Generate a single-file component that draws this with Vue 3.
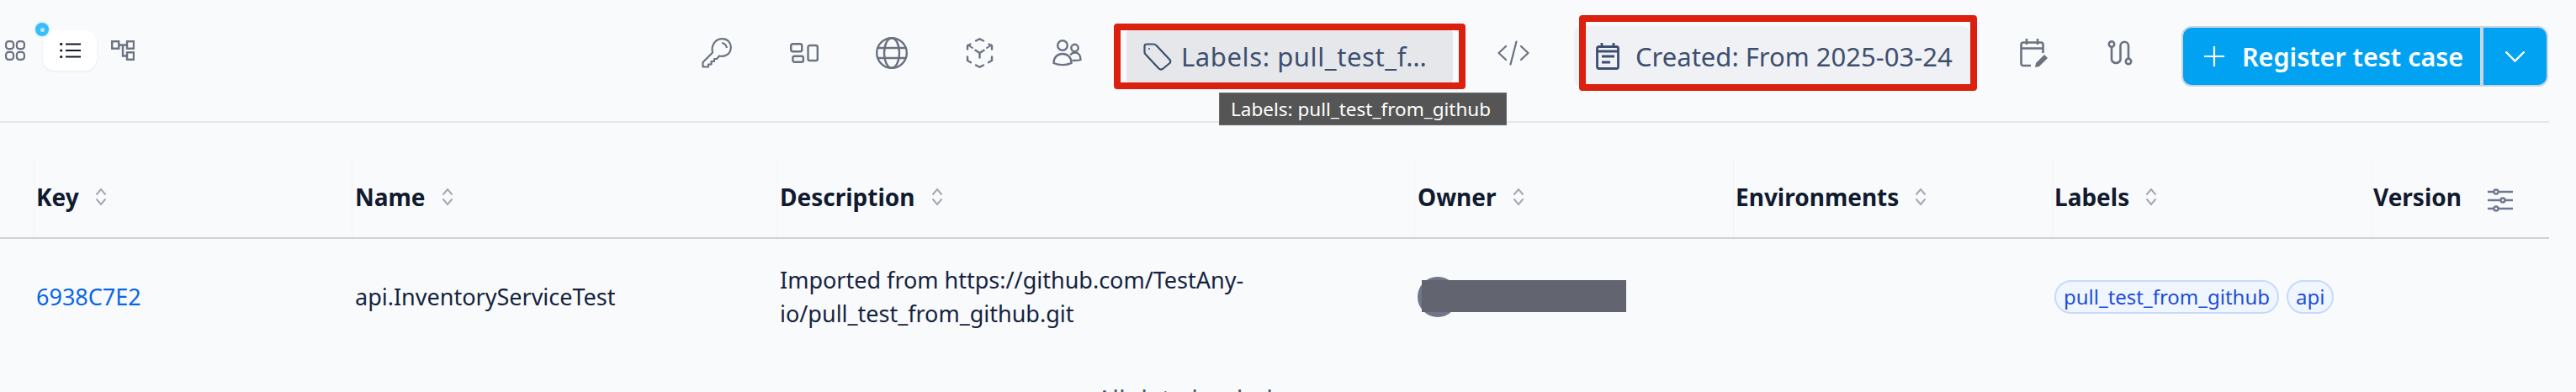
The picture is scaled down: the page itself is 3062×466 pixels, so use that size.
<script setup>
const views = [
  { id: 'grid', active: false },
  { id: 'list', active: true },
  { id: 'tree', active: false }
]
const columns = [
  { label: 'Key', width: 378, pad: 3, sort: true },
  { label: 'Name', width: 505, pad: 4, sort: true },
  { label: 'Description', width: 758, pad: 4, sort: true },
  { label: 'Owner', width: 379, pad: 4, sort: true },
  { label: 'Environments', width: 379, pad: 3, sort: true },
  { label: 'Labels', width: 379, pad: 3, sort: true },
  { label: 'Version', width: 212, pad: 3, sort: false }
]
const cell = (i) => ({ width: columns[i].width + 'px', paddingLeft: columns[i].pad + 'px' })
</script>

<template>
  <div class="page">
    <header class="toolbar">
      <div class="views">
        <button v-for="v in views" :key="v.id" class="view" :class="[v.id, { active: v.active }]">
          <svg v-if="v.id === 'grid'" width="24" height="24" viewBox="0 0 24 24" fill="none" stroke="#6b7280" stroke-width="2.200">
            <rect x="1.100" y="1.100" width="9" height="9" rx="3.200" /><rect x="13.900" y="1.100" width="9" height="9" rx="3.200" />
            <rect x="1.100" y="13.900" width="9" height="9" rx="3.200" /><rect x="13.900" y="13.900" width="9" height="9" rx="3.200" />
          </svg>
          <svg v-else-if="v.id === 'list'" width="25" height="18" viewBox="0 0 25 18" fill="none" stroke="#111827" stroke-width="2">
            <path d="M7 1.500h18M7 9h18M7 16.500h18" /><circle cx="1.700" cy="1.500" r="1.600" fill="#111827" stroke="none" /><circle cx="1.700" cy="9" r="1.600" fill="#111827" stroke="none" /><circle cx="1.700" cy="16.500" r="1.600" fill="#111827" stroke="none" />
          </svg>
          <svg v-else width="28" height="24" viewBox="0 0 28 24" fill="none" stroke="#6b7280" stroke-width="2.400">
            <rect x="1.200" y="1.200" width="8" height="8.500" /><rect x="19" y="1.200" width="8" height="8.500" /><rect x="19" y="14.300" width="8" height="8.500" />
            <path d="M9 5.500h10M14 5.500v13h5" />
          </svg>
        </button>
        <span class="dot"><i></i></span>
      </div>

      <div class="actions">
        <button class="ico">
          <svg width="36" height="36" viewBox="0 0 36 36" fill="none" stroke="#6b7280" stroke-width="2.200" stroke-linejoin="round">
            <path d="M1.500 34.500V29L13 17.500C11 9 16 1.200 25 1.200 31 1.200 34.800 6 34.800 11 34.800 19 28 23 21 21.500L18 25h-3v3h-3.500v3.500H8v3z" /><path d="M24 6c3 .5 5.500 3 6 6" />
          </svg>
        </button>
        <button class="ico">
          <svg width="34" height="24" viewBox="0 0 34 24" fill="none" stroke="#6b7280" stroke-width="2.400">
            <rect x="1.200" y="1.200" width="13" height="9" rx="2" /><rect x="3.400" y="15.800" width="12.500" height="7" rx="2" /><rect x="21.500" y="3" width="11.300" height="18" rx="2" />
          </svg>
        </button>
        <button class="ico">
          <svg width="38" height="38" viewBox="0 0 38 38" fill="none" stroke="#6b7280" stroke-width="2.400">
            <circle cx="19" cy="19" r="17.800" /><ellipse cx="19" cy="19" rx="9" ry="17.800" /><path d="M3 13h32M3 25h32" />
          </svg>
        </button>
        <button class="ico">
          <svg width="33" height="36" viewBox="0 0 33 36" fill="none" stroke="#6b7280" stroke-width="2.400" stroke-linecap="round" stroke-linejoin="round">
            <path d="M12 3.500l4.500-2.300L21 3.500M2 13.500V9.500l3.500-2M27.500 7.500L31 9.500v4M2 22.500v4.500l4 2.200M31 22.500v4.500l-4 2.200M12 32.500l4.500 2.300 4.500-2.300M16.500 18l-5-3.200M16.500 18l5-3.200M16.500 18v5.500" />
            <path d="M2.500 8.500l5.500 3.500M30.500 8.500L25 12" stroke-width="2" />
          </svg>
        </button>
        <button class="ico">
          <svg width="35" height="32" viewBox="0 0 35 32" fill="none" stroke="#6b7280" stroke-width="2.400">
            <circle cx="12" cy="7" r="5.800" /><circle cx="26.500" cy="10" r="4.200" />
            <path d="M1.500 28c0-7 4.500-11 10.500-11s10.500 4 10.500 11c-6 2.800-15 2.800-21 0z" /><path d="M21.500 18.500c1-2 3-3 5.500-3 4 0 6.500 3.500 6.500 8.500-2 .8-5.500 1-10 1" />
          </svg>
        </button>

        <div class="filter-wrap">
          <button class="filter filter-labels">
            <svg width="34" height="33" viewBox="0 0 34 33" fill="none" stroke="#3d4f6f" stroke-width="2.200" stroke-linejoin="round">
              <path d="M1.500 4Q1.500 1.500 4 1.500H12Q14 1.500 15.500 3L31.500 20Q33 22 31.500 24L23 31Q20.500 32.500 18.500 30.500L3 14Q1.500 12.500 1.500 11Z" /><circle cx="7" cy="7" r="1" fill="#3d4f6f" stroke="none" />
            </svg>
            <span class="labels-text">Labels: pull_test_f…</span>
          </button>
          <div class="tooltip">Labels: pull_test_from_github</div>
          <span class="mark mark-labels"></span>
        </div>

        <button class="ico ico-code">
          <svg width="38" height="30" viewBox="0 0 38 30" fill="none" stroke="#6b7280" stroke-width="2.200" stroke-linecap="round" stroke-linejoin="round">
            <path d="M10 7L1.500 15 10 23M28 7l8.500 8L28 23M22.500 1.500L15.500 28.500" />
          </svg>
        </button>

        <div class="filter-wrap">
          <button class="filter filter-created">
            <svg width="28" height="32" viewBox="0 0 28 32" fill="none" stroke="#3d4f6f" stroke-width="2.800">
              <rect x="1.500" y="4.500" width="25" height="26" rx="2" /><path d="M7 0v6M21 0v6M1.500 10h25" /><path d="M7 16h15M7 23h10" />
            </svg>
            <span>Created: From 2025-03-24</span>
          </button>
          <span class="mark mark-created"></span>
        </div>

        <button class="ico ico-edit">
          <svg width="34" height="34" viewBox="0 0 34 34" fill="none" stroke="#6b7280" stroke-width="2.600">
            <path d="M13 32H4c-1.500 0-2.500-1-2.500-2.500V7C1.500 5.500 2.500 4.500 4 4.500h21c1.500 0 2.500 1 2.500 2.500v10M1.500 11.500h26M8 0v7M21 0v7" /><path d="M18 34l1-5 10-10 4 4-10 10z" fill="#6b7280" stroke="none" />
          </svg>
        </button>
        <button class="ico ico-branch">
          <svg width="30" height="30" viewBox="0 0 30 30" fill="none" stroke="#6b7280" stroke-width="2.600">
            <circle cx="5" cy="4.500" r="3.200" /><circle cx="25" cy="25" r="3.200" />
            <path d="M5 7.700V23a5.500 5.500 0 0 0 10.500 0V6.500a4.700 4.700 0 0 1 9.500 0v15.200" />
          </svg>
        </button>

        <div class="register">
          <button class="reg-main">
            <svg width="24" height="24" viewBox="0 0 24 24" fill="none" stroke="#fff" stroke-width="2.200"><path d="M12 0v24M0 12h24" /></svg>
            <span>Register test case</span>
          </button>
          <button class="reg-more">
            <svg width="25" height="14" viewBox="0 0 25 14" fill="none" stroke="#fff" stroke-width="2.400"><path d="M1.500 1.500L12.500 12.500 23.500 1.500" /></svg>
          </button>
        </div>
      </div>
    </header>

    <div class="table">
      <div class="thead">
        <div v-for="(c, i) in columns" :key="c.label" class="th" :style="cell(i)">
          <span class="th-label">{{ c.label }}</span>
          <svg v-if="c.sort" class="sort" width="14" height="22" viewBox="0 0 14 22" fill="none" stroke="#a2a8b4" stroke-width="2">
            <path d="M1.500 8.500L7 2l5.500 6.500M1.500 13.500L7 20l5.500-6.500" />
          </svg>
          <svg v-else class="settings" width="30" height="28" viewBox="0 0 30 28" fill="none" stroke="#6f7890" stroke-width="2.400">
            <path d="M0 4h30M0 14h30M0 24h30" /><circle cx="10" cy="4" r="2.500" fill="#f9fafc" /><circle cx="18" cy="14" r="2.500" fill="#f9fafc" /><circle cx="10" cy="24" r="2.500" fill="#f9fafc" />
          </svg>
        </div>
      </div>

      <div class="row">
        <div class="td" :style="cell(0)"><a class="key">6938C7E2</a></div>
        <div class="td" :style="cell(1)">api.InventoryServiceTest</div>
        <div class="td" :style="cell(2)">Imported from https://github.com/TestAny-<br />io/pull_test_from_github.git</div>
        <div class="td owner" :style="cell(3)"><span class="avatar"><span class="mask"></span></span></div>
        <div class="td" :style="cell(4)"></div>
        <div class="td tags" :style="cell(5)"><span class="tag">pull_test_from_github</span><span class="tag">api</span></div>
      </div>
    </div>

    <div class="foot">All data loaded</div>
  </div>
</template>

<style scoped>
.page {
  width: 3062px;
  height: 466px;
  overflow: hidden;
  background: #f9fafc;
  font-family: "Noto Sans", "Open Sans", sans-serif;
  color: #15233f;
}
button {
  border: 0;
  background: none;
  padding: 0;
  font: inherit;
  display: inline-flex;
  align-items: center;
  flex: none;
}
.toolbar {
  box-sizing: border-box;
  width: 3030px;
  height: 146px;
  padding: 31px 1px 0 6px;
  border-bottom: 2px solid #e5e7eb;
  display: flex;
  align-items: flex-start;
}
.views {
  display: flex;
  align-items: center;
  position: relative;
  height: 48px;
  margin-top: 5px;
}
.view {
  height: 48px;
  justify-content: center;
}
.view.grid {
  width: 24px;
  margin-right: 21px;
}
.view.list {
  width: 64px;
  margin-right: 17px;
  background: #fff;
  border-radius: 14px;
  box-shadow: 0 1px 3px rgba(17, 24, 39, 0.08);
}
.view.tree {
  width: 28px;
}
.dot {
  position: absolute;
  left: 36px;
  top: -9px;
  width: 16px;
  height: 16px;
  border-radius: 50%;
  background: #38bdf8;
  box-shadow: 0 0 0 2px #e0f2fe;
  display: flex;
  align-items: center;
  justify-content: center;
}
.dot i {
  width: 5px;
  height: 5px;
  border-radius: 50%;
  background: #bae6fd;
}
.actions {
  display: flex;
  align-items: center;
  margin-left: auto;
  height: 72px;
}
.ico {
  width: 104px;
  height: 64px;
  justify-content: center;
  margin-bottom: 8px;
}
.ico-code {
  width: 144px;
}
.ico-edit {
  width: 152px;
}
.ico-branch {
  width: 52px;
  margin-right: 47px;
}
.filter-wrap {
  position: relative;
  height: 72px;
}
.filter-wrap:first-of-type {
  margin-left: 19px;
}
.filter {
  height: 72px;
  border-radius: 10px;
  color: #3d4f6f;
  font-size: 31px;
  white-space: nowrap;
}
.labels-text {
  letter-spacing: 0.6px;
}
.filter-labels {
  width: 388px;
  background: #e5e7eb;
  padding-left: 20px;
  gap: 11px;
}
.filter-created {
  width: 471px;
  background: #f0f1f5;
  padding-left: 26px;
  gap: 19px;
}
.mark {
  position: absolute;
  box-sizing: border-box;
  border: 8px solid #dc200f;
  border-radius: 4px;
  pointer-events: none;
}
.mark-labels {
  left: -15px;
  top: -3px;
  width: 418px;
  height: 78px;
}
.mark-created {
  left: 6px;
  top: -13px;
  width: 473px;
  height: 90px;
}
.tooltip {
  position: absolute;
  left: 110px;
  top: 79px;
  box-sizing: border-box;
  width: 342px;
  height: 39px;
  background: #555;
  border: 1px solid #6b6b6b;
  color: #fff;
  font-size: 22.500px;
  line-height: 37px;
  padding-left: 13px;
  white-space: nowrap;
  z-index: 2;
}
.register {
  box-sizing: border-box;
  display: flex;
  width: 436px;
  height: 72px;
  background: #02a2f2;
  border: 2px solid #cbd5e1;
  border-radius: 12px;
  overflow: hidden;
  font-weight: 600;
  font-size: 30.500px;
}
.reg-main {
  box-sizing: border-box;
  width: 357px;
  color: #fff;
  gap: 21px;
  padding-left: 25px;
  font-weight: 600;
  border-right: 4px solid #cbd5e1;
}
.reg-more {
  flex: 1;
  justify-content: center;
}
.table {
  width: 3030px;
}
.thead {
  display: flex;
  height: 94px;
  padding: 42px 0 0 40px;
  border-bottom: 2px solid #cfd1d8;
}
.th {
  font-weight: 700;
  font-size: 28px;
  color: #111a2e;
  display: flex;
  align-items: flex-start;
  gap: 19px;
  box-sizing: border-box;
  padding-top: 24px;
  line-height: 44px;
  flex: none;
  border-left: 1px solid #f3f4f6;
}
.th-label {
  margin-left: -1px;
}
.sort {
  margin-top: 11px;
}
.settings {
  margin-left: 12px;
  margin-top: 12px;
}
.row {
  display: flex;
  align-items: center;
  height: 138px;
  padding-left: 40px;
}
.td {
  font-size: 27px;
  flex: none;
  box-sizing: border-box;
  line-height: 40px;
}
.key {
  color: #0a66e8;
}
.owner {
  height: 48px;
}
.avatar {
  position: relative;
  display: block;
  width: 48px;
  height: 48px;
  border-radius: 50%;
  background: #6f7688;
}
.mask {
  position: absolute;
  left: 5px;
  top: 4px;
  width: 243px;
  height: 38px;
  background: #62646f;
}
.tags {
  display: flex;
  gap: 9px;
}
.tag {
  font-size: 24px;
  line-height: 36px;
  padding: 0 9px;
  border-radius: 20px;
  background: #f0f6ff;
  border: 2px solid #c7dafc;
  color: #1d4ed8;
}
.foot {
  width: 2816px;
  margin-top: 33px;
  text-align: center;
  font-size: 30px;
  line-height: 40px;
  color: #4b5563;
}
</style>

<style>
html, body { margin: 0; background: #f9fafc; }
</style>
